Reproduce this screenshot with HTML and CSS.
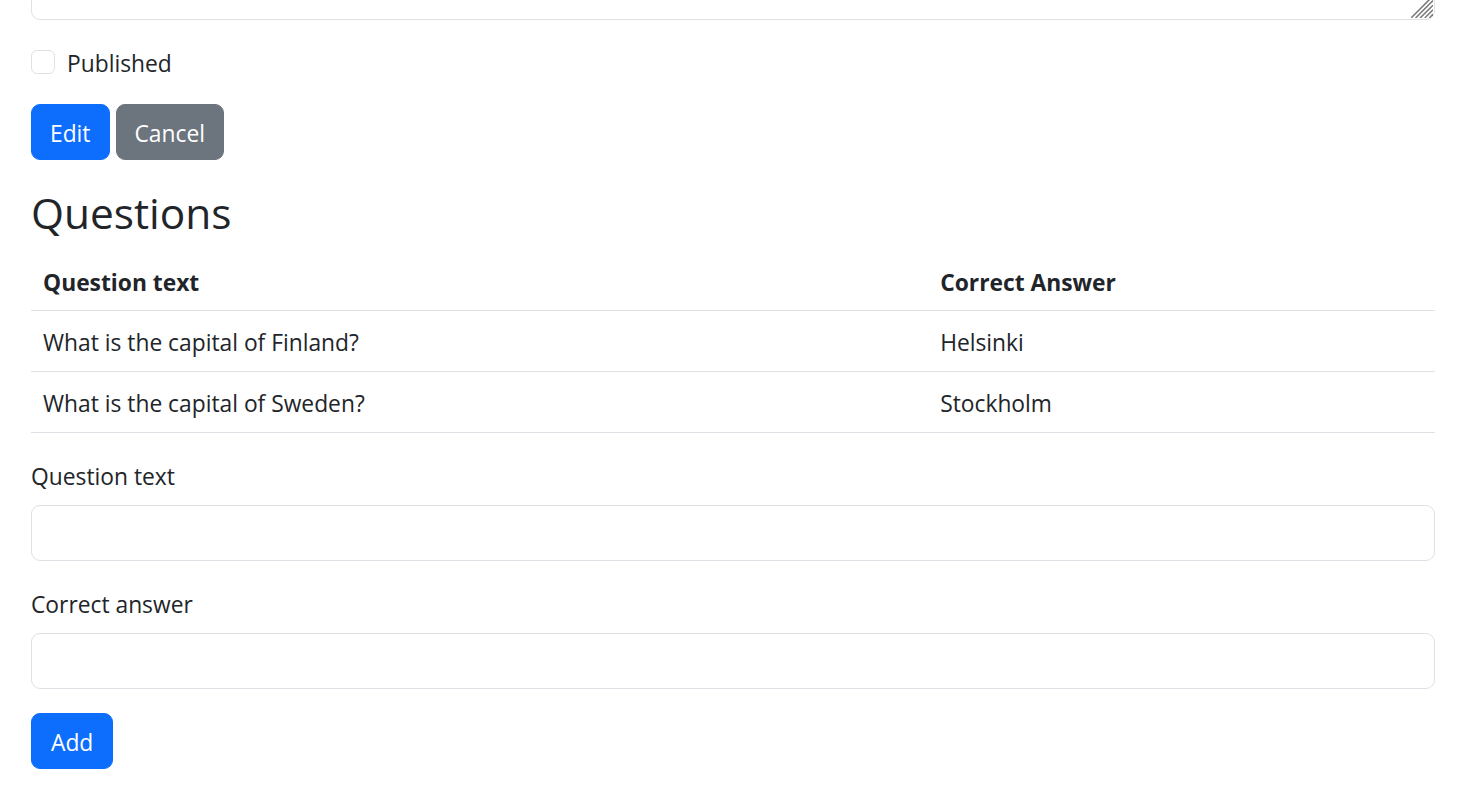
FILE: index.html
```html
<!DOCTYPE html>
<html lang="en">
<head>
<meta charset="utf-8">
<title>Edit quiz</title>
<link rel="stylesheet" href="styles.css">
</head>
<body>
<main class="page">
  <div class="field">
    <div class="textarea-wrap">
      <textarea class="form-control textarea"></textarea>
      <svg class="resizer" width="24" height="24" viewBox="0 0 24 24" aria-hidden="true">
        <g stroke="#767676" stroke-width="1.6" stroke-linecap="butt">
          <line x1="0" y1="24" x2="24" y2="0"/>
          <line x1="5" y1="24" x2="24" y2="5"/>
          <line x1="10" y1="24" x2="24" y2="10"/>
          <line x1="15" y1="24" x2="24" y2="15"/>
          <line x1="20" y1="24" x2="24" y2="20"/>
        </g>
      </svg>
    </div>
  </div>

  <div class="form-check">
    <input type="checkbox" class="check" id="published">
    <label for="published" class="check-label">Published</label>
  </div>

  <div class="actions">
    <button class="btn btn-primary" type="button">Edit</button>
    <button class="btn btn-secondary" type="button">Cancel</button>
  </div>

  <h2 class="heading">Questions</h2>

  <table class="table">
    <thead>
      <tr>
        <th class="col-text">Question text</th>
        <th>Correct Answer</th>
      </tr>
    </thead>
    <tbody>
      <tr>
        <td>What is the capital of Finland?</td>
        <td>Helsinki</td>
      </tr>
      <tr>
        <td>What is the capital of Sweden?</td>
        <td>Stockholm</td>
      </tr>
    </tbody>
  </table>

  <div class="field">
    <label class="form-label" for="qtext">Question text</label>
    <input class="form-control" id="qtext" type="text">
  </div>

  <div class="field">
    <label class="form-label" for="qanswer">Correct answer</label>
    <input class="form-control" id="qanswer" type="text">
  </div>

  <button class="btn btn-primary btn-add" type="button">Add</button>
</main>
</body>
</html>
```

FILE: styles.css
```css
* {
  box-sizing: border-box;
}

html, body {
  margin: 0;
  background: #fff;
}

body {
  font-family: "Open Sans", "Noto Sans", sans-serif;
  font-size: 22.8px;
  line-height: 36px;
  color: #212529;
}

.page {
  margin-top: -100px;
  padding: 0 27px 0 31px;
}

.field {
  margin-bottom: 24px;
}

.textarea-wrap {
  position: relative;
}

.form-control {
  display: block;
  width: 100%;
  height: 56px;
  padding: 9px 18px;
  font: inherit;
  color: #212529;
  background: #fff;
  border: 1px solid #dee2e6;
  border-radius: 9px;
  outline: none;
}

.textarea {
  height: 120px;
  resize: none;
}

.resizer {
  position: absolute;
  right: 2px;
  bottom: 2px;
  width: 22px;
  height: 22px;
}

.form-check {
  display: flex;
  align-items: flex-start;
  margin-bottom: 22px;
}

.check {
  appearance: none;
  -webkit-appearance: none;
  width: 24px;
  height: 24px;
  margin: 6px 12px 0 0;
  border: 1px solid #dee2e6;
  border-radius: 6px;
  background: #fff;
  flex: none;
}

.check-label {
  padding-top: 2px;
  line-height: 36px;
}

.actions {
  display: flex;
  gap: 6px;
}

.btn {
  display: inline-block;
  height: 56px;
  padding: 11px 18px 7px;
  font: inherit;
  line-height: 36px;
  color: #fff;
  border: 1px solid transparent;
  border-radius: 9px;
  cursor: pointer;
}

.btn-add {
  padding-left: 19px;
  padding-right: 19px;
}

.btn-primary {
  background: #0d6efd;
  border-color: #0d6efd;
}

.btn-secondary {
  background: #6c757d;
  border-color: #6c757d;
}

.heading {
  margin: 24px 0 10px;
  padding-top: 2px;
  font-size: 42.4px;
  font-weight: 400;
  line-height: 54px;
}

.table {
  width: 100%;
  border-collapse: collapse;
  margin-bottom: 24px;
}

.table th,
.table td {
  padding: 14px 12px 10px;
  text-align: left;
  border-bottom: 1px solid #dee2e6;
  vertical-align: top;
}

.table th {
  padding-top: 15px;
  padding-bottom: 9px;
  font-weight: 700;
}

.col-text {
  width: 63.9%;
}

.form-label {
  display: block;
  padding-top: 2px;
  margin-bottom: 10px;
}
```
